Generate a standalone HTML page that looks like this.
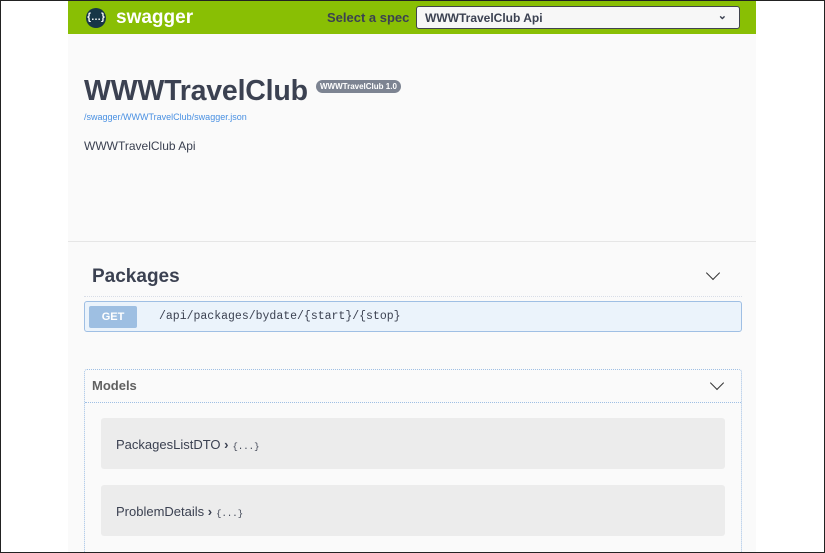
<!DOCTYPE html>
<html><head><meta charset="utf-8"><style>
*{box-sizing:border-box;margin:0;padding:0}
html,body{width:825px;height:553px;overflow:hidden;background:#fff;font-family:"Liberation Sans",sans-serif}
.frame{position:absolute;left:0;top:0;width:825px;height:553px;border:1px solid #222;z-index:5}
.main{position:absolute;left:68px;top:1px;width:688px;height:551px;background:#fafafa;overflow:hidden}
.top{position:absolute;left:0;top:0;width:688px;height:33px;background:#89bf04}
.logo{position:absolute;left:18px;top:7px;width:20px;height:20px;border-radius:50%;background:#173647;color:#fff;font-size:10px;line-height:20px;text-align:center;font-weight:bold}
.brand{position:absolute;left:48px;top:6px;color:#fff;font-weight:bold;font-size:19px}
.spec{position:absolute;left:259px;top:9px;font-size:13px;color:#3b4151;font-weight:bold}
.sel{position:absolute;left:348px;top:5px;width:324px;height:23px;background:#f7f7f7;border:1px solid #41444e;border-radius:3px;font-size:12px;font-weight:bold;color:#3b4151;padding:4px 8px}
.sel span{position:absolute;right:12px;top:2px;font-size:11px}
h1{position:absolute;left:16px;top:74px;font-size:28.5px;color:#3b4151;font-weight:bold;letter-spacing:-0.2px}
.badge{position:absolute;left:248px;top:79px;background:#7d8492;color:#fff;font-size:8px;font-weight:bold;border-radius:7px;padding:2px 4px}
.url{position:absolute;left:16px;top:111px;font-size:9px;color:#4990e2}
.desc{position:absolute;left:16px;top:138px;font-size:12px;color:#3b4151}
.sep{position:absolute;left:0;top:240px;width:688px;height:1px;background:#e6e6e6}
.tag{position:absolute;left:24px;top:265px;font-size:19px;color:#3b4151;font-weight:bold}
.chev{position:absolute;width:10px;height:10px;border-right:1.6px solid #333;border-bottom:1.6px solid #333;transform:rotate(45deg)}
.tagline{position:absolute;left:16px;top:295px;width:658px;border-top:1px dotted #d8dde7}
.op{position:absolute;left:16px;top:300px;width:658px;height:31px;background:#ebf3fb;border:1px solid #9fbfe4;border-radius:3px}
.get{position:absolute;left:4px;top:4px;width:48px;height:22px;background:#9ebfe2;color:#fff;font-weight:bold;font-size:11px;text-align:center;line-height:22px;border-radius:2px}
.path{position:absolute;left:74px;top:8px;font-family:"Liberation Mono",monospace;font-size:11.5px;color:#3b4151}
.models{position:absolute;left:16px;top:368px;width:658px;height:190px;border:1px dotted #9fbfe4;border-radius:3px}
.mh{height:33px;border-bottom:1px dotted #9fbfe4;font-size:13px;color:#606060;font-weight:bold;padding:8px 7px}
.m{position:absolute;left:16px;width:624px;height:51px;background:#ececec;border-radius:3px;font-size:13px;color:#3b4151;padding:19px 15px}
.m small{font-family:"Liberation Mono",monospace;font-size:9px;margin-left:4px}
</style></head><body>
<div class="frame"></div>
<div class="main">
<div class="top"><div class="logo">{…}</div><div class="brand">swagger</div>
<div class="spec">Select a spec</div><div class="sel">WWWTravelClub Api<span>&#8964;</span></div></div>
<h1>WWWTravelClub</h1><div class="badge">WWWTravelClub 1.0</div>
<div class="url">/swagger/WWWTravelClub/swagger.json</div>
<div class="desc">WWWTravelClub Api</div>
<div class="sep"></div>
<div class="tag">Packages</div>
<div class="chev" style="left:640px;top:267px"></div>
<div class="tagline"></div>
<div class="op"><div class="get">GET</div><div class="path">/api/packages/bydate/{start}/{stop}</div></div>
<div class="models"><div class="mh">Models</div>
<div class="chev" style="left:627px;top:8px"></div>
<div class="m" style="top:48px">PackagesListDTO <b>›</b><small>{...}</small></div>
<div class="m" style="top:115px">ProblemDetails <b>›</b><small>{...}</small></div>
</div>
</div>
</body></html>
